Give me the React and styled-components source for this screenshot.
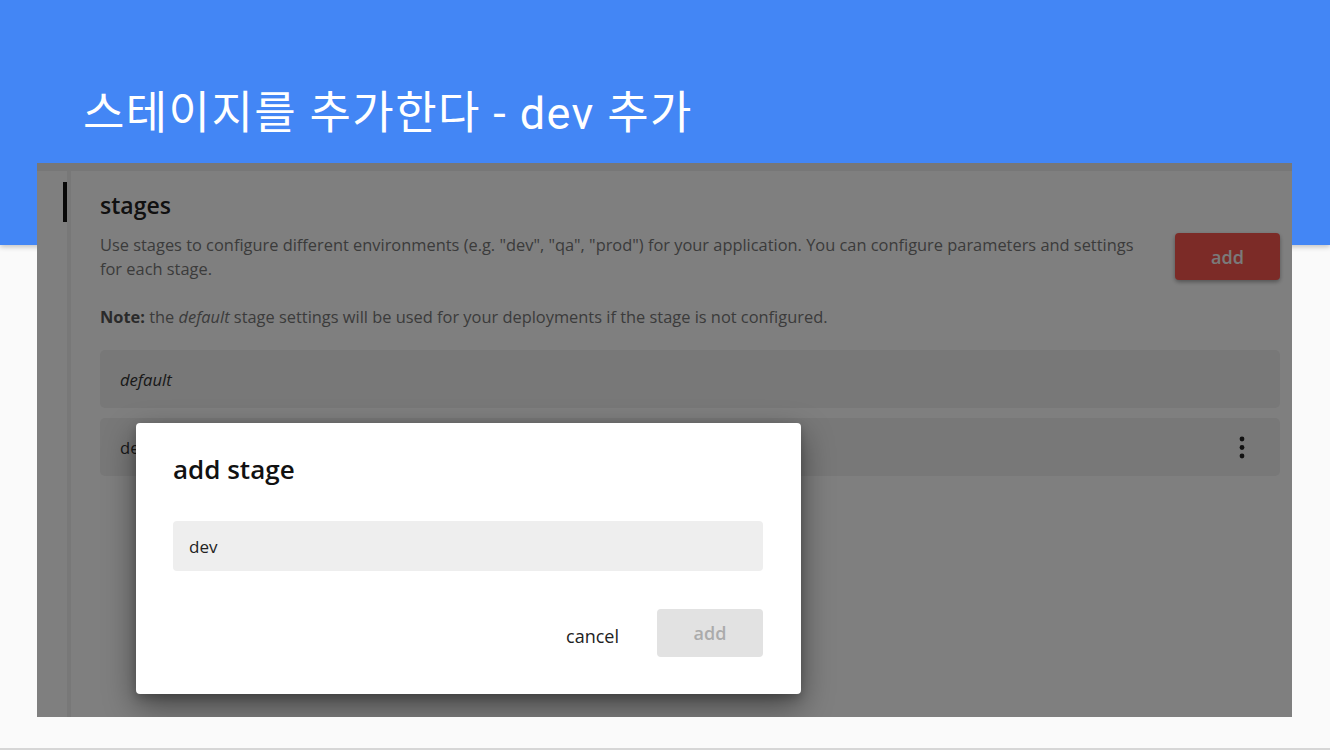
import styled, { createGlobalStyle } from 'styled-components';

const GlobalStyle = createGlobalStyle`
  html, body {
    margin: 0;
    padding: 0;
    background: #fafafa;
  }
  * {
    box-sizing: border-box;
  }
`

export default function App() {
  return (
    <Slide>
      <GlobalStyle />

      <Header>
        <Title>스테이지를 추가한다 - dev 추가</Title>
      </Header>

      <Body>
        <Frame>
          <TopStrip />

          <Page>
            <Gutter>
              <ActiveBar />
            </Gutter>

            <Content>
              <Heading>stages</Heading>

              <IntroRow>
                <Intro>
                  <p>
                    Use stages to configure different environments (e.g. "dev", "qa", "prod") for your application. You can configure parameters and settings for each stage.
                  </p>
                  <p>
                    <b>Note:</b> the <i>default</i> stage settings will be used for your deployments if the stage is not configured.
                  </p>
                </Intro>
                <RaisedButton>add</RaisedButton>
              </IntroRow>

              <StageList>
                <StageRow>
                  <span className="name default">default</span>
                </StageRow>
                <StageRow>
                  <span className="name">dev</span>
                  <Kebab viewBox="0 0 8 24" width="8" height="24">
                    <circle cx="4" cy="4" r="2.4" />
                    <circle cx="4" cy="12.5" r="2.4" />
                    <circle cx="4" cy="21" r="2.4" />
                  </Kebab>
                </StageRow>
              </StageList>
            </Content>
          </Page>

          <Overlay />

          <Dialog>
            <DialogTitle>add stage</DialogTitle>
            <Field value="dev" readOnly />
            <Actions>
              <TextButton>cancel</TextButton>
              <FlatButton disabled>add</FlatButton>
            </Actions>
          </Dialog>
        </Frame>
      </Body>
    </Slide>
  )
}

const Slide = styled.div`
  width: 1330px;
  height: 750px;
  display: flex;
  flex-direction: column;
  overflow: hidden;
  background: #fafafa;
`

const Header = styled.div`
  height: 245px;
  flex-shrink: 0;
  padding: 84px 0 0 83px;
  background: #4386f5;
  box-shadow: 0 2px 5px rgba(0, 0, 0, 0.22);
  position: relative;
  z-index: 1;
`

const Title = styled.h1`
  margin: 0;
  font-family: Roboto, "Noto Sans CJK KR", sans-serif;
  font-weight: 400;
  font-size: 45px;
  line-height: 60px;
  color: #ffffff;
  letter-spacing: 1.4px;
`

const Body = styled.div`
  flex: 1;
  padding-left: 37px;
  border-bottom: 2px solid #d6d6d6;
`

const Frame = styled.div`
  width: 1255px;
  height: 554px;
  margin-top: -82px;
  position: relative;
  z-index: 2;
  overflow: hidden;
  background: #ffffff;
  display: flex;
  flex-direction: column;
  font-family: "Open Sans", sans-serif;
`

const TopStrip = styled.div`
  height: 8px;
  background: #eeeeee;
`

const Page = styled.div`
  flex: 1;
  display: flex;
`

const Gutter = styled.div`
  width: 34px;
  flex-shrink: 0;
  border-right: 4px solid #f0f0f0;
  display: flex;
  justify-content: flex-end;
  padding-top: 11px;
`

const ActiveBar = styled.div`
  width: 4px;
  height: 40px;
  background: #111111;
`

const Content = styled.div`
  flex: 1;
  padding: 19px 12px 0 29px;
`

const Heading = styled.h2`
  margin: 0 0 13px;
  font-size: 23px;
  line-height: 30px;
  font-weight: 600;
  color: #222222;
`

const IntroRow = styled.div`
  display: flex;
  align-items: flex-start;
  gap: 24px;
`

const Intro = styled.div`
  flex: 1;
  max-width: 1050px;

  p {
    margin: 0 0 24px;
    font-size: 16.4px;
    line-height: 24px;
    color: #777777;
  }

  p:last-child {
    margin-bottom: 0;
  }

  b {
    font-weight: 700;
    color: #555555;
  }
`

const RaisedButton = styled.button`
  width: 105px;
  height: 47px;
  margin-left: auto;
  flex-shrink: 0;
  border: none;
  border-radius: 4px;
  background: #f8564f;
  color: #f4f4f4;
  font-family: "Open Sans", sans-serif;
  font-size: 18px;
  font-weight: 600;
  box-shadow: 0 2px 4px rgba(0, 0, 0, 0.35);
`

const StageList = styled.div`
  margin-top: 21px;
  display: flex;
  flex-direction: column;
  gap: 10px;
`

const StageRow = styled.div`
  height: 58px;
  padding: 0 34px 0 20px;
  display: flex;
  align-items: center;
  justify-content: space-between;
  background: #f0f0f0;
  border-radius: 5px;

  .name {
    font-size: 16.6px;
    color: #333333;
  }

  .default {
    font-style: italic;
  }
`

const Kebab = styled.svg`
  fill: #222222;
`

const Overlay = styled.div`
  position: absolute;
  inset: 0;
  background: rgba(0, 0, 0, 0.5);
`

const Dialog = styled.div`
  position: absolute;
  left: 99px;
  top: 260px;
  width: 665px;
  height: 271px;
  padding: 30px 38px 37px 37px;
  background: #ffffff;
  border-radius: 4px;
  box-shadow: 0 12px 32px rgba(0, 0, 0, 0.45), 0 4px 10px rgba(0, 0, 0, 0.2);
  display: flex;
  flex-direction: column;
`

const DialogTitle = styled.h3`
  margin: 0 0 36px;
  font-size: 26px;
  line-height: 32px;
  font-weight: 600;
  color: #111111;
`

const Field = styled.input`
  height: 50px;
  width: 100%;
  padding: 0 16px;
  border: none;
  outline: none;
  border-radius: 4px;
  background: #eeeeee;
  font-family: "Open Sans", sans-serif;
  font-size: 17px;
  color: #222222;
`

const Actions = styled.div`
  margin-top: 38px;
  display: flex;
  justify-content: flex-end;
  align-items: center;
  gap: 22px;
`

const TextButton = styled.button`
  height: 48px;
  padding: 6px 16px 0;
  border: none;
  background: transparent;
  font-family: "Open Sans", sans-serif;
  font-size: 18px;
  color: #222222;
`

const FlatButton = styled.button`
  width: 106px;
  height: 48px;
  border: none;
  border-radius: 4px;
  background: #e2e2e2;
  font-family: "Open Sans", sans-serif;
  font-size: 18px;
  font-weight: 600;
  color: #ababab;
`
